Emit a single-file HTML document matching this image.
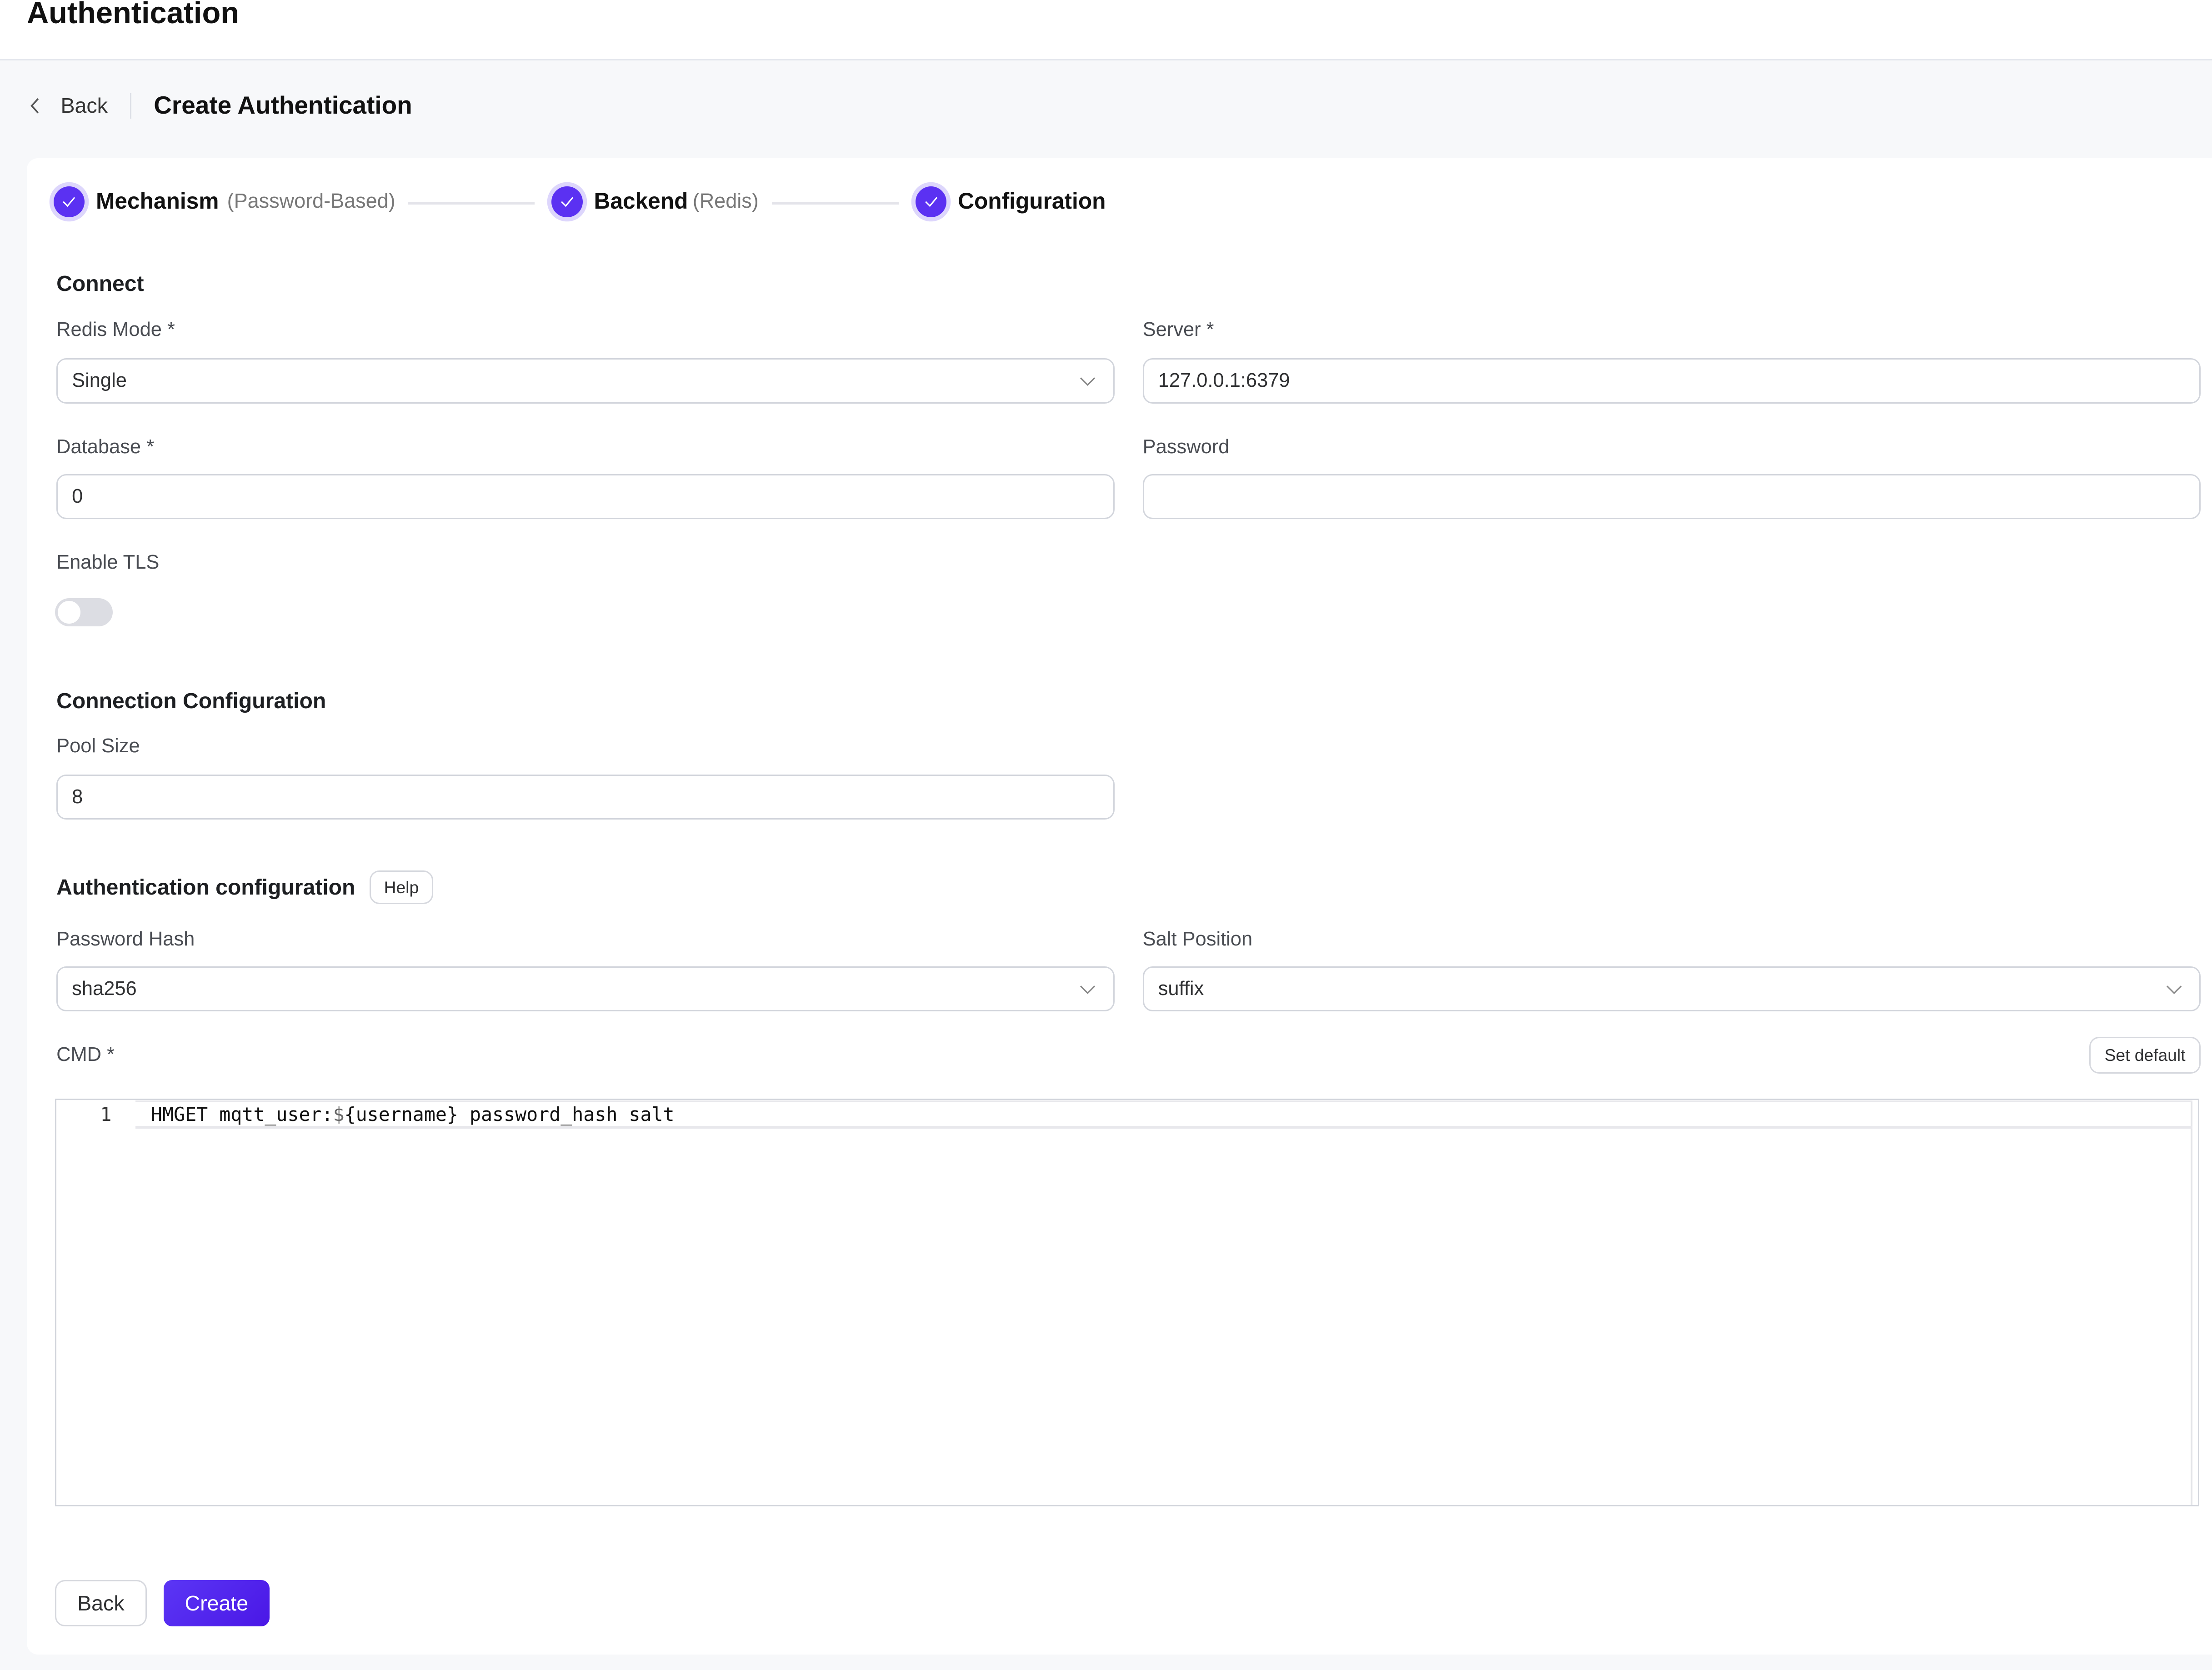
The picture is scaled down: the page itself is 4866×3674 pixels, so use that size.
<!DOCTYPE html>
<html><head><meta charset="utf-8"><style>
html,body{margin:0;padding:0;width:4866px;height:3674px;overflow:hidden;background:#f7f8fa}
#w{zoom:3.1033;width:1568px;height:1184px;position:relative;font-family:"Liberation Sans",Arial,sans-serif;color:#303133;background:#f7f8fa}
.a{position:absolute;white-space:nowrap}
.hdr{left:0;top:0;width:1568px;height:42px;background:#fff;border-bottom:1px solid #e4e7ed}
.card{left:19px;top:112px;width:1560px;height:1061px;background:#fff;border-radius:8px}
.lbl{font-size:14px;color:#494c52}
.sec{font-size:15.5px;font-weight:bold;color:#1d1f22}
.inp{height:32px;border:1px solid #d2d5dc;border-radius:7px;box-sizing:border-box;font-size:14px;line-height:30px;padding-left:10px;color:#303133;background:#fff}
.chev{position:absolute;right:12px;top:10px}
.step{width:22px;height:22px;border-radius:50%;background:#5b31f2;box-shadow:0 0 0 3px #ddd6fc}
.line{height:2px;background:#e4e4ea}
.btn{border:1px solid #d6d8de;border-radius:7px;box-sizing:border-box;background:#fff;text-align:center;color:#303133}
</style></head><body><div id="w">
<div class="a hdr"></div>
<div class="a" style="left:19px;top:-3px;font-size:21.5px;font-weight:bold;color:#111">Authentication</div>
<svg class="a" style="left:20px;top:68px" width="10" height="14" viewBox="0 0 10 14"><path d="M7 2L2.5 7L7 12" fill="none" stroke="#555" stroke-width="1.2"/></svg>
<div class="a" style="left:43px;top:66px;font-size:15px;color:#333">Back</div>
<div class="a" style="left:92px;top:66px;width:1px;height:18px;background:#dcdfe6"></div>
<div class="a" style="left:109px;top:64px;font-size:17.7px;font-weight:bold;color:#111">Create Authentication</div>
<div class="a card"></div>

<div class="a step" style="left:38px;top:132px"></div>
<svg class="a" style="left:43px;top:137px" width="12" height="12" viewBox="0 0 12 12"><path d="M2 6l3 3 5-6" fill="none" stroke="#fff" stroke-width="1"/></svg>
<div class="a" style="left:68px;top:133px;font-size:16px;font-weight:bold;color:#111">Mechanism</div>
<div class="a" style="left:161px;top:134px;font-size:14.5px;color:#777">(Password-Based)</div>
<div class="a line" style="left:289px;top:143px;width:90px"></div>
<div class="a step" style="left:391px;top:132px"></div>
<svg class="a" style="left:396px;top:137px" width="12" height="12" viewBox="0 0 12 12"><path d="M2 6l3 3 5-6" fill="none" stroke="#fff" stroke-width="1"/></svg>
<div class="a" style="left:421px;top:133px;font-size:16px;font-weight:bold;color:#111">Backend</div>
<div class="a" style="left:491px;top:134px;font-size:14.5px;color:#777">(Redis)</div>
<div class="a line" style="left:547px;top:143px;width:90px"></div>
<div class="a step" style="left:649px;top:132px"></div>
<svg class="a" style="left:654px;top:137px" width="12" height="12" viewBox="0 0 12 12"><path d="M2 6l3 3 5-6" fill="none" stroke="#fff" stroke-width="1"/></svg>
<div class="a" style="left:679px;top:133px;font-size:16px;font-weight:bold;color:#111">Configuration</div>

<div class="a sec" style="left:40px;top:192px">Connect</div>
<div class="a lbl" style="left:40px;top:226px">Redis Mode *</div>
<div class="a lbl" style="left:810px;top:226px">Server *</div>
<div class="a inp" style="left:40px;top:254px;width:750px">Single<svg class="chev" width="12" height="10" viewBox="0 0 12 10"><path d="M1 3l5 5 5-5" fill="none" stroke="#888" stroke-width="1"/></svg></div>
<div class="a inp" style="left:810px;top:254px;width:750px">127.0.0.1:6379</div>
<div class="a lbl" style="left:40px;top:309px">Database *</div>
<div class="a lbl" style="left:810px;top:309px">Password</div>
<div class="a inp" style="left:40px;top:336px;width:750px">0</div>
<div class="a inp" style="left:810px;top:336px;width:750px"></div>
<div class="a lbl" style="left:40px;top:391px">Enable TLS</div>
<div class="a" style="left:39px;top:424px;width:41px;height:20px;border-radius:10px;background:#dcdde3"></div>
<div class="a" style="left:41px;top:426px;width:16px;height:16px;border-radius:50%;background:#fff"></div>

<div class="a sec" style="left:40px;top:488px">Connection Configuration</div>
<div class="a lbl" style="left:40px;top:521px">Pool Size</div>
<div class="a inp" style="left:40px;top:549px;width:750px">8</div>

<div class="a sec" style="left:40px;top:620px">Authentication configuration</div>
<div class="a btn" style="left:262px;top:617px;width:45px;height:24px;font-size:12px;line-height:22px">Help</div>
<div class="a lbl" style="left:40px;top:658px">Password Hash</div>
<div class="a lbl" style="left:810px;top:658px">Salt Position</div>
<div class="a inp" style="left:40px;top:685px;width:750px">sha256<svg class="chev" width="12" height="10" viewBox="0 0 12 10"><path d="M1 3l5 5 5-5" fill="none" stroke="#888" stroke-width="1"/></svg></div>
<div class="a inp" style="left:810px;top:685px;width:750px">suffix<svg class="chev" width="12" height="10" viewBox="0 0 12 10"><path d="M1 3l5 5 5-5" fill="none" stroke="#888" stroke-width="1"/></svg></div>
<div class="a lbl" style="left:40px;top:740px">CMD *</div>
<div class="a btn" style="left:1481px;top:735px;width:79px;height:26px;font-size:12px;line-height:24px">Set default</div>

<div class="a" style="left:39px;top:779px;width:1520px;height:289px;border:1px solid #d2d5dc;box-sizing:border-box;background:#fff"></div>
<div class="a" style="left:1553px;top:781px;width:1px;height:286px;background:#e3e4e8"></div>
<div class="a" style="left:96px;top:780px;width:1458px;height:20px;border-top:1px solid #e8e8ec;border-bottom:2px solid #e8e8ec;box-sizing:border-box"></div>
<div class="a" style="left:71px;top:782px;font-family:'DejaVu Sans Mono','Liberation Mono',monospace;font-size:13.4px;color:#333">1</div>
<div class="a" style="left:107px;top:782px;font-family:'DejaVu Sans Mono','Liberation Mono',monospace;font-size:13.4px;color:#111">HMGET mqtt_user:<span style="color:#666">$</span>{username} password_hash salt</div>

<div class="a btn" style="left:39px;top:1120px;width:65px;height:33px;font-size:15px;line-height:31px">Back</div>
<div class="a" style="left:116px;top:1120px;width:75px;height:33px;border-radius:6px;background:linear-gradient(135deg,#5b36f5,#4a17e6);color:#fff;font-size:15px;line-height:33px;text-align:center">Create</div>
</div></body></html>
